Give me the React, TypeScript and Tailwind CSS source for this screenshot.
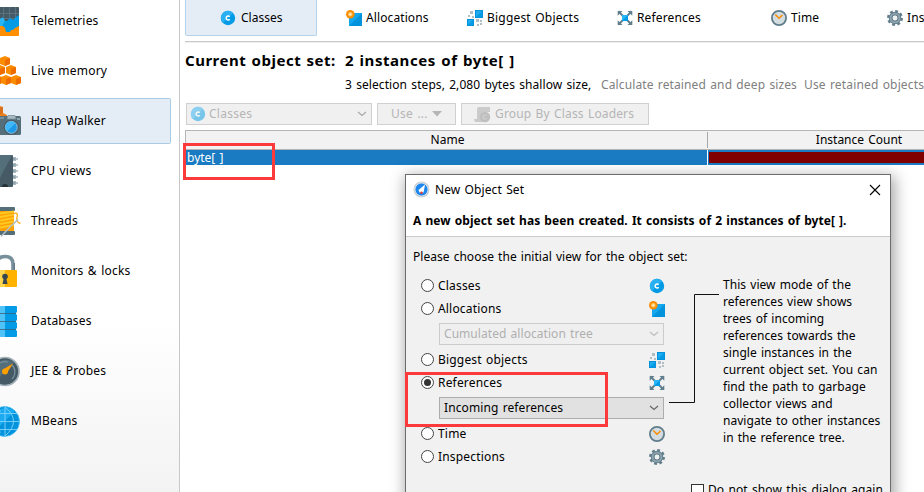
import React from "react";

type IconProps = { className?: string };

function ClassIcon({ className = "" }: IconProps) {
  return (
    <svg width="16" height="16" viewBox="0 0 16 16" className={className}>
      <circle cx="8" cy="8" r="7.2" fill="#039be5" />
      <path d="M2.9 13.1A7.2 7.2 0 0 1 13.1 2.9Z" fill="#29b0f2" />
      <path d="M9.700 6.700A2 2 0 1 0 9.700 9.300" fill="none" stroke="#fff" strokeWidth="1.500" />
    </svg>
  );
}

function AllocationsIcon({ className = "" }: IconProps) {
  return (
    <svg width="16" height="16" viewBox="0 0 16 16" className={className}>
      <rect x="3" y="3" width="13" height="13" fill="#0293dc" />
      <path d="M3 3H16L3 16Z" fill="#14a8f0" />
      <circle cx="4.3" cy="4.3" r="4.3" fill="#fb8c00" />
      <circle cx="4.3" cy="4.3" r="2.300" fill="#ffc561" />
      <circle cx="4.3" cy="4.3" r="1.100" fill="#fff3d6" />
    </svg>
  );
}

function BiggestIcon({ className = "" }: IconProps) {
  return (
    <svg width="16" height="16" viewBox="0 0 16 16" className={className}>
      <rect x="8" y="0" width="8" height="8" fill="#0288d1" />
      <path d="M8.500 0.500H15.500V7.500H8.500Z" fill="#039be5" />
      <path d="M9 1H15L9 7Z" fill="#1fa9ee" />
      <rect x="0" y="9" width="7" height="7" fill="#0288d1" />
      <path d="M0.500 9.500H6.500V15.500H0.500Z" fill="#039be5" />
      <path d="M1 10H6L1 15Z" fill="#1fa9ee" />
      <path d="M3 1h3v3H3zM1 5h2v2H1zM5 6h2v2H5zM9 9h3v3H9zM13 10h2v2H13zM10 14h2v2H10zM13 13h2v2H13z" fill="#b0bec5" />
    </svg>
  );
}

function ReferencesIcon({ className = "" }: IconProps) {
  return (
    <svg width="16" height="16" viewBox="0 0 16 16" className={className}>
      <path d="M2 2L6 6M14 2L10 6M2 14L6 10M14 14L10 10" stroke="#607d8b" strokeWidth="1.900" />
      <path d="M0.700 1H5.500L0.700 5.800ZM15.300 1H10.500L15.300 5.800ZM0.700 15H5.500L0.700 10.200ZM15.300 15H10.500L15.300 10.200Z" fill="#607d8b" />
      <path d="M1.500 1L2.500 0.500M14.500 1L13.500 0.500" stroke="#90a4ae" strokeWidth="0.500" />
      <rect x="5" y="5" width="6" height="6" fill="#039be5" />
      <path d="M5 5H11L5 11Z" fill="#29b6f6" />
    </svg>
  );
}

function TimeIcon({ className = "" }: IconProps) {
  return (
    <svg width="16" height="16" viewBox="0 0 16 16" className={className}>
      <circle cx="8" cy="8" r="7.1" fill="#d3dce0" stroke="#607d8b" strokeWidth="1.8" />
      <path d="M4.300 4.500L8 8.300L11.500 5" fill="none" stroke="#fb8c00" strokeWidth="1.5" />
    </svg>
  );
}

function GearIcon({ className = "" }: IconProps) {
  return (
    <svg width="16" height="16" viewBox="0 0 16 16" className={className}>
      <circle cx="8" cy="8" r="6.7" fill="none" stroke="#607d8b" strokeWidth="2.5" strokeDasharray="2.800 2.462" />
      <circle cx="8" cy="8" r="4.300" fill="none" stroke="#607d8b" strokeWidth="3.800" />
      <circle cx="8" cy="8" r="4.400" fill="none" stroke="#90a4ae" strokeWidth="1.900" />
      <circle cx="8" cy="8" r="2.200" fill="#eef1f2" />
    </svg>
  );
}

function ScriptIcon() {
  return (
    <svg width="17" height="17" viewBox="0 0 17 17">
      <path d="M5 1H16V6H13V16H2Q0 16 0 13H3V3Q3 1 5 1Z" fill="#cbcbcb" />
      <circle cx="11" cy="11" r="5.200" fill="#bfbfbf" />
      <path d="M12.500 9.700A2 2 0 1 0 12.500 12.300" fill="none" stroke="#d0d0d0" strokeWidth="1.200" />
    </svg>
  );
}

function Chevron({ color }: { color: string }) {
  return (
    <svg width="10" height="6" viewBox="0 0 10 6">
      <path d="M1 1L5 4.500L9 1" fill="none" stroke={color} strokeWidth="1.200" />
    </svg>
  );
}

function Glyph({ children }: { children: React.ReactNode }) {
  return (
    <svg width="22" height="40" viewBox="0 0 22 40" className="shrink-0">
      {children}
    </svg>
  );
}

function Cube({ x, y }: { x: number; y: number }) {
  return (
    <g transform={`translate(${x} ${y})`}>
      <path d="M0 2L5 0L10 2V8L5 10L0 8Z" fill="#fb8c00" />
      <path d="M5 4L10 2V8L5 10Z" fill="#ef6c00" />
    </g>
  );
}

const views = [
  {
    label: "Telemetries",
    icon: (
      <Glyph>
        <rect x="-10" y="6" width="29" height="29" rx="1" fill="#ff8f00" />
        <path d="M0 6H18Q19 6 19 7V22H0Z" fill="#455a64" />
        <path d="M0 12.500H19M0 17.500H19M3.500 6V22M9.500 6V22M15.500 6V22" stroke="#607d8b" strokeWidth="0.700" />
        <path d="M0 18L3 16.500L5 20L7 20L10 17L13 19L16 16L19 14V25L15 27L13 29L11 29L10 31L6 31L5 27L3 25L0 25Z" fill="#039be5" />
        <path d="M0 18L3 16.500L5 20L2 25L0 25Z" fill="#29b6f6" />
      </Glyph>
    ),
  },
  {
    label: "Live memory",
    icon: (
      <Glyph>
        <Cube x={0} y={5} />
        <Cube x={-5} y={14} />
        <Cube x={6} y={14} />
        <Cube x={-8} y={24} />
        <Cube x={1} y={24} />
        <Cube x={11} y={24} />
      </Glyph>
    ),
  },
  {
    label: "Heap Walker",
    icon: (
      <Glyph>
        <path d="M-6 8L0 5L3 6V12L7 14V15L0 18Z" fill="#ef7d1a" />
        <path d="M0 7L3 6V12L0 13Z" fill="#d9701b" />
        <rect x="-4" y="15" width="25" height="19" rx="1.500" fill="#546e7a" />
        <rect x="0" y="16" width="4" height="2" fill="#78909c" />
        <path d="M7 18L8 14.500H15L16 18Z" fill="#a8b8c0" stroke="#78909c" strokeWidth="0.800" />
        <rect x="17" y="17" width="3" height="2" fill="#90a4ae" />
        <circle cx="11.300" cy="26.300" r="7.600" fill="#455a64" />
        <circle cx="11.300" cy="26.300" r="6" fill="#1e9be8" stroke="#90bcd2" />
        <path d="M7 30.600A6 6 0 0 1 15.600 22Z" fill="#42b8f8" />
      </Glyph>
    ),
  },
  {
    label: "CPU views",
    icon: (
      <Glyph>
        <path d="M12 8H16M12 14H16M12 20H16M12 26H16M12 32H16" stroke="#90a4ae" strokeWidth="3.600" />
        <path d="M15 8H18M15 14H18M15 20H18M15 26H18M15 32H18" stroke="#a9b7be" strokeWidth="1.700" />
        <path d="M0 4H12Q13 4 13 5V35Q13 36 12 36H0Z" fill="#455a64" />
        <path d="M0 4H12L0 27Z" fill="#546e7a" />
        <path d="M2 36A3 3 0 0 1 8 36Z" fill="#263238" />
      </Glyph>
    ),
  },
  {
    label: "Threads",
    icon: (
      <Glyph>
        <rect x="-2" y="6" width="17" height="4" rx="1" fill="#546e7a" />
        <rect x="-2" y="30" width="17" height="4" rx="1" fill="#546e7a" />
        <rect x="0" y="10" width="14" height="20" fill="#ffa000" />
        <path d="M0 12.500L14 10.500M0 16L14 13.500M0 19.500L14 17M0 23L14 20.500M0 26.500L14 24" stroke="#ffc824" strokeWidth="2" />
        <path d="M13 13Q17 11 17.500 14Q15 21 20.500 22.500" fill="none" stroke="#fbad18" strokeWidth="1.300" />
        <path d="M1 35.500L10 26L18 18.500" fill="none" stroke="#b0bec5" strokeWidth="1.600" />
      </Glyph>
    ),
  },
  {
    label: "Monitors & locks",
    icon: (
      <Glyph>
        <path d="M-3 13Q-3 5.500 5 5.500Q13 5.500 13 13V19" fill="none" stroke="#78909c" strokeWidth="3.600" />
        <path d="M14.300 12V19" stroke="#546e7a" strokeWidth="1" />
        <rect x="-2" y="19" width="19" height="17" rx="0.800" fill="#ffb300" />
        <rect x="0" y="19" width="5" height="17" fill="#ffd54f" />
        <circle cx="5" cy="25.500" r="2.800" fill="#37474f" />
        <path d="M4 26H6L7.500 33H2.500Z" fill="#37474f" />
      </Glyph>
    ),
  },
  {
    label: "Databases",
    icon: (
      <Glyph>
        <rect x="-2" y="5" width="19" height="31" rx="1" fill="#039be5" />
        <rect x="0" y="5" width="5" height="31" fill="#4fc3f7" />
        <path d="M0 12.500H16M0 20.500H16M0 28.500H16" stroke="#37617a" strokeWidth="0.800" />
        <path d="M16 12.500H17M16 20.500H17M16 28.500H17" stroke="#fff" strokeWidth="2" />
      </Glyph>
    ),
  },
  {
    label: "JEE & Probes",
    icon: (
      <Glyph>
        <circle cx="5" cy="20.500" r="14" fill="#455a64" stroke="#a3b1b8" strokeWidth="1.700" />
        <path d="M-4 30A13 13 0 0 1 14 11.500Z" fill="#546e7a" />
        <path d="M12 14A9.800 9.800 0 0 1 12 28" fill="none" stroke="#78909c" strokeWidth="1.200" />
        <path d="M0 12A10 10 0 0 1 8 11" fill="none" stroke="#78909c" strokeWidth="1.200" />
        <path d="M3 18.500L13 12.500L7 22Z" fill="#ffa000" />
        <circle cx="5" cy="20.500" r="3" fill="#ffa000" />
      </Glyph>
    ),
  },
  {
    label: "MBeans",
    icon: (
      <Glyph>
        <circle cx="4.500" cy="20.500" r="15" fill="#0293dc" stroke="#4fc3f7" strokeWidth="0.800" />
        <path d="M-6 31A15 15 0 0 1 15 10Z" fill="#1caaf0" />
        <path d="M0 20.500H19M0 12.500H17M0 28.500H17M5 6V35M5 6Q22 20 5 35M0 9Q-3 20 0 32" fill="none" stroke="#81d4fa" strokeWidth="0.900" />
      </Glyph>
    ),
  },
];

const tabs = [
  { label: "Allocations", icon: <AllocationsIcon />, width: "w-[121px]", track: "tracking-[0.1px]" },
  { label: "Biggest Objects", icon: <BiggestIcon />, width: "w-[150px]", track: "tracking-[0.2px]" },
  { label: "References", icon: <ReferencesIcon />, width: "w-[154px]", track: "tracking-[0.15px]" },
  { label: "Time", icon: <TimeIcon />, width: "w-[116px]", track: "tracking-[0.1px]" },
  { label: "Inspections", icon: <GearIcon />, width: "w-[121px]", track: "tracking-[0.1px]" },
];

function Sidebar() {
  return (
    <aside className="h-full w-[180px] shrink-0 overflow-hidden border-r border-[#c8c8c8] bg-linear-to-b from-white from-65% to-[#f3f3f3]">
      <div className="-mt-1 flex flex-col">
        {views.map((v) => (
          <div key={v.label} className="h-[50px] py-[2px] pr-2">
            <div
              className={
                "flex h-[46px] items-center gap-[9px] whitespace-nowrap rounded-r-[2px] border-y border-r " +
                (v.label === "Heap Walker" ? "border-[#a9cbe6] bg-[#e4edf6]" : "border-transparent")
              }
            >
              {v.icon}
              <span className="tracking-[0.2px]">{v.label}</span>
            </div>
          </div>
        ))}
      </div>
    </aside>
  );
}

function Radio({ label, checked = false, icon }: { label: string; checked?: boolean; icon: React.ReactNode }) {
  return (
    <div className="flex h-[23px] items-center">
      <span className="flex size-[13px] items-center justify-center rounded-full border border-[#444] bg-white">
        {checked && <span className="size-[7px] rounded-full bg-[#333]" />}
      </span>
      <span className="ml-1 flex-1 tracking-[0.18px]">{label}</span>
      {icon}
    </div>
  );
}

function Dialog() {
  return (
    <div className="absolute left-[405px] top-[174px] flex h-[340px] w-[486px] flex-col border border-[#6b6b6b] bg-[#f1f1f1] shadow-[2px_4px_14px_2px_rgba(0,0,0,0.35)]">
      <div className="h-[62px] shrink-0 border-b border-[#cdcdcd] bg-white pl-[7px]">
        <div className="flex h-[29px] items-center pr-[9px]">
          <svg width="17" height="17" viewBox="0 0 17 17">
            <circle cx="8.500" cy="8.500" r="8" fill="#c9cdd0" />
            <circle cx="8.500" cy="8.500" r="6.500" fill="#1d87ed" stroke="#f5f5f5" strokeWidth="0.700" />
            <path d="M12 3.500L10.500 11.500H6.500L5.500 9Z" fill="#fff" />
            <circle cx="8.500" cy="11.800" r="1.200" fill="#e53935" />
          </svg>
          <span className="ml-[5px] flex-1 tracking-[0.1px]">New Object Set</span>
          <svg width="12" height="12" viewBox="0 0 12 12">
            <path d="M1 1L11 11M11 1L1 11" stroke="#000" strokeWidth="1.100" />
          </svg>
        </div>
        <div className="flex h-[33px] items-center whitespace-nowrap font-bold tracking-[0.04px]">
          A new object set has been created. It consists of 2 instances of byte[ ].
        </div>
      </div>
      <div className="flex h-[37px] shrink-0 items-center whitespace-nowrap pl-[7px] pt-[3px] tracking-[0.02px]">
        Please choose the initial view for the object set:
      </div>
      <div className="flex pl-[15px]">
        <div className="flex w-[244px] shrink-0 flex-col">
          <Radio label="Classes" icon={<ClassIcon />} />
          <Radio label="Allocations" icon={<AllocationsIcon />} />
          <div className="my-[3px] ml-[18px] flex h-[22px] w-[225px] items-center justify-between border border-[#cccccc] bg-[#efefef] pl-1 pr-1 tracking-[0.05px] text-[#b0b0b0]">
            <span>Cumulated allocation tree</span>
            <Chevron color="#bdbdbd" />
          </div>
          <Radio label="Biggest objects" icon={<BiggestIcon />} />
          <Radio label="References" checked icon={<ReferencesIcon />} />
          <div className="my-[3px] ml-[18px] flex h-[22px] w-[225px] items-center justify-between border border-[#adadad] bg-[#e1e1e1] pl-1 pr-1 tracking-[0.1px]">
            <span>Incoming references</span>
            <Chevron color="#666666" />
          </div>
          <Radio label="Time" icon={<TimeIcon />} />
          <Radio label="Inspections" icon={<GearIcon />} />
        </div>
        <svg width="50" height="110" viewBox="0 0 50 110" className="ml-[4px] mt-[19px] shrink-0">
          <path d="M50 1.500H25.500V109.500H0" fill="none" stroke="#111" strokeWidth="1" />
        </svg>
        <div className="ml-1 mt-[2px] whitespace-pre leading-[17px] tracking-[0.04px]">
          {"This view mode of the\nreferences view shows\ntrees of incoming\nreferences towards the\nsingle instances in the\ncurrent object set. You can\nfind the path to garbage\ncollector views and\nnavigate to other instances\nin the reference tree."}
        </div>
      </div>
      <div className="mt-[14px] flex items-center gap-1 whitespace-nowrap pl-[285px] tracking-[0.1px]">
        <span className="size-[13px] border border-[#333] bg-white" />
        <span>Do not show this dialog again</span>
      </div>
    </div>
  );
}

export default function App() {
  return (
    <div className="relative flex h-[492px] w-[924px] overflow-hidden bg-white font-['Noto_Sans','Open_Sans',sans-serif] text-[12px] leading-[16px] text-black [word-spacing:1px]">
      <Sidebar />
      <main className="flex min-w-0 flex-1 flex-col overflow-hidden pl-[5px]">
        <nav className="flex h-[36px] shrink-0 whitespace-nowrap">
          <div className="flex w-[132px] shrink-0 items-center gap-[5px] rounded-b-[2px] border-x border-b border-[#b4d2e9] bg-[#e4edf6] pl-[34px]">
            <ClassIcon />
            <span>Classes</span>
          </div>
          {tabs.map((t) => (
            <div key={t.label} className={"flex shrink-0 items-center gap-1 pl-[29px] " + t.width}>
              {t.icon}
              <span className={t.track}>{t.label}</span>
            </div>
          ))}
        </nav>
        <div className="mt-[5px] h-[2px] shrink-0 border-t border-[#cacaca] bg-[#efefef]" />
        <div className="flex h-[58px] shrink-0 whitespace-nowrap pt-[6px]">
          <div className="w-[160px] shrink-0 text-[15px] font-bold leading-[22px] tracking-[0.5px]">Current object set:</div>
          <div>
            <div className="text-[15px] font-bold leading-[22px] tracking-[0.55px]">2 instances of byte[ ]</div>
            <div className="mt-[6px] flex">
              <span className="w-[256px] shrink-0 tracking-[0.08px]">3 selection steps, 2,080 bytes shallow size,</span>
              <span className="w-[203px] shrink-0 tracking-[0.12px] text-[#808080]">Calculate retained and deep sizes</span>
              <span className="tracking-[0.15px] text-[#808080]">Use retained objects</span>
            </div>
          </div>
        </div>
        <div className="mt-[2px] flex h-[22px] shrink-0 gap-[5px] whitespace-nowrap pl-px tracking-[0.25px] text-[#b5b5b5]">
          <div className="flex w-[186px] items-center border border-[#d0d0d0] bg-[#f0f0f0] pl-[3px] pr-1">
            <ClassIcon className="opacity-50" />
            <span className="ml-[3px] flex-1">Classes</span>
            <Chevron color="#a8a8a8" />
          </div>
          <div className="flex w-[79px] items-center border border-[#d0d0d0] bg-[#f0f0f0] pl-[13px]">
            <span className="w-[41px]">Use ...</span>
            <svg width="10" height="6" viewBox="0 0 10 6">
              <path d="M0 0H10L5 5.500Z" fill="#b5b5b5" />
            </svg>
          </div>
          <div className="flex w-[188px] items-center gap-1 border border-[#d0d0d0] bg-[#f0f0f0] pl-[12px]">
            <ScriptIcon />
            <span className="tracking-[0.15px]">Group By Class Loaders</span>
          </div>
        </div>
        <div className="mt-[5px] flex h-[20px] shrink-0 border-y border-l border-[#b5b5b5] bg-[#f2f2f2]">
          <div className="my-px flex w-[522px] shrink-0 items-center justify-center border-r border-[#a8a8a8] pl-[2px]">Name</div>
          <div className="flex w-[302px] shrink-0 items-center justify-center">Instance Count</div>
        </div>
        <div className="flex h-[15px] shrink-0 bg-[#1a7bc2] text-white">
          <div className="flex w-[523px] shrink-0 items-center border-r border-white pl-[2px]">byte[ ]</div>
          <div className="flex-1 py-[2px] pl-px">
            <div className="h-full bg-[#800000]" />
          </div>
        </div>
      </main>
      <Dialog />
      <div className="absolute left-[183px] top-[143px] h-[37px] w-[92px] border-[3px] border-[#fb3b3b]" />
      <div className="absolute left-[405px] top-[372px] h-[55px] w-[203px] border-[3px] border-[#fb3b3b]" />
    </div>
  );
}
